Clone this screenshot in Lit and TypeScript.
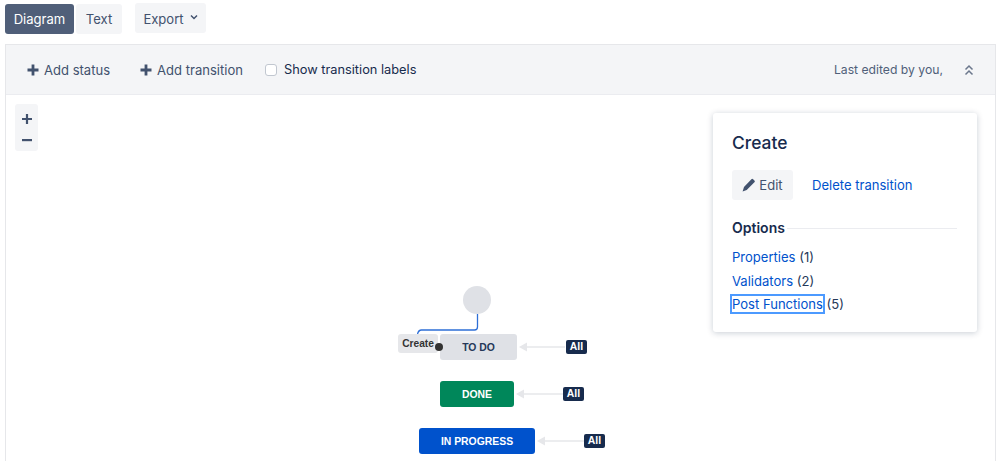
import { LitElement, html, css, svg } from "lit";
import { customElement } from "lit/decorators.js";

const plus = html`<svg class="plus" viewBox="0 0 12 12"><path d="M4.6 .5h2.8v4.1h4.1v2.8H7.4v4.1H4.6V7.4H.5V4.6h4.1z" fill="#42526e"/></svg>`;

const arrow = (x: number, y: number, len: number) => svg`
  <path d="M${x} ${y}h${len}" stroke="#e6e7ea" stroke-width="1.5" fill="none"/>
  <path d="M${x - 8} ${y}l8 -4.5v9z" fill="#e6e7ea"/>`;

@customElement("app-root")
export class AppRoot extends LitElement {
  static styles = css`
    :host { display: block; width: 999px; height: 461px; overflow: hidden; background: #fff; font-family: Inter, "Liberation Sans", sans-serif; color: #172b4d; font-size: 13.05px; }
    * { box-sizing: border-box; }
    .tabs { display: flex; align-items: flex-start; height: 44px; padding: 3px 0 0 5px; }
    .btn { display: flex; align-items: center; justify-content: center; border-radius: 3px; background: #f4f5f7; color: #42526e; height: 30px; margin-top: 1px; }
    .diagram { width: 69px; background: #505f79; color: #fff; }
    .text { width: 46px; margin-left: 2px; }
    .export { width: 71px; margin: 0 0 0 13px; gap: 6px; padding-top: 1px; }
    .chev { width: 8px; height: 6px; margin-top: -3px; }
    .panel { position: relative; margin: 0 3px 0 5px; height: 417px; border: 1px solid #e6e7ea; border-bottom: 0; }
    .toolbar { display: flex; align-items: center; height: 50px; padding: 0 0 0 21px; background: #f4f5f7; border-bottom: 1px solid #ebecf0; color: #42526e; }
    .tool { display: flex; align-items: center; gap: 5px; }
    .add2 { margin-left: 30px; }
    .plus { width: 12px; height: 12px; flex: none; }
    .check { display: flex; align-items: center; gap: 7px; margin-left: 22px; color: #172b4d; font-size: 12.8px; }
    .box { width: 12px; height: 12px; border: 1px solid #c1c7d0; border-radius: 3px; background: #fff; }
    .edited { margin-left: auto; font-size: 12.2px; color: #505f79; }
    .collapse { width: 10px; height: 12px; margin: 0 21px 0 21px; }
    .canvas { position: relative; height: 366px; }
    .zoom { position: absolute; left: 9px; top: 9px; width: 23px; height: 47px; background: #f4f5f7; border-radius: 3px; display: flex; flex-direction: column; align-items: center; gap: 11px; padding-top: 10px; }
    .zoom svg { width: 10px; height: 10px; }
    .card { position: absolute; left: 707px; top: 18px; width: 264px; height: 219px; background: #fff; border-radius: 3px; box-shadow: 0 1px 6px rgba(9, 30, 66, .22); padding: 18px 20px 18px 19px; }
    .card h2 { margin: 0; font-size: 17.4px; line-height: 24px; font-weight: 500; color: #172b4d; }
    .actions { display: flex; align-items: center; margin-top: 15px; height: 30px; }
    .edit { display: flex; align-items: center; justify-content: center; gap: 4px; width: 61px; height: 30px; background: #f4f5f7; border-radius: 3px; color: #42526e; }
    .edit svg { width: 13px; height: 14px; }
    a { color: #0052cc; text-decoration: none; }
    .delete { margin-left: 19px; }
    .options { display: flex; align-items: center; gap: 2px; margin-top: 18px; font-weight: 600; font-size: 14px; line-height: 20px; }
    .options::after { content: ""; flex: 1; height: 1px; background: #ebecf0; }
    .links { margin-top: 8px; display: flex; flex-direction: column; }
    .links div { height: 23.5px; line-height: 23.5px; color: #253858; }
    .focus { outline: 2px solid #4c9aff; outline-offset: 0; }
    .node { position: absolute; display: flex; align-items: center; justify-content: center; font-size: 10.4px; font-weight: 700; font-family: "Liberation Sans", Arial, sans-serif; border-radius: 3px; height: 26px; }
    .todo { left: 434px; top: 239px; width: 77px; background: #dfe1e6; color: #253858; }
    .done { left: 434px; top: 286px; width: 74px; background: #00875a; color: #fff; }
    .prog { left: 413px; top: 333px; width: 116px; background: #0052cc; color: #fff; }
    .start { position: absolute; left: 457px; top: 191px; width: 28px; height: 28px; border-radius: 50%; background: #dfe1e6; }
    .label { position: absolute; left: 392px; top: 239px; width: 40px; height: 19px; background: #e6e7ea; border-radius: 3px; padding-bottom: 1px; display: flex; align-items: center; justify-content: center; font: 700 10.2px "Liberation Sans", Arial, sans-serif; color: #333; }
    .dot { position: absolute; left: 429px; top: 248px; width: 8px; height: 8px; border-radius: 50%; background: #333; }
    .all { position: absolute; width: 21px; height: 14px; background: #172b4d; color: #fff; border-radius: 2px; font: 700 10.4px/14px "Liberation Sans", Arial, sans-serif; text-align: center; }
    .lines { position: absolute; left: 0; top: 0; width: 700px; height: 366px; }
  `;

  render() {
    return html`
      <div class="tabs">
        <div class="btn diagram">Diagram</div>
        <div class="btn text">Text</div>
        <div class="btn export">Export
          <svg class="chev" viewBox="0 0 8 6"><path d="M1 1.5l3 3 3-3" fill="none" stroke="#42526e" stroke-width="1.5"/></svg>
        </div>
      </div>
      <div class="panel">
        <div class="toolbar">
          <div class="tool">${plus}<span>Add status</span></div>
          <div class="tool add2">${plus}<span>Add transition</span></div>
          <label class="check"><span class="box"></span><span>Show transition labels</span></label>
          <span class="edited">Last edited by you,</span>
          <svg class="collapse" viewBox="0 0 10 12"><path d="M1.5 5.5L5 2l3.5 3.5M1.5 10.5L5 7l3.5 3.5" fill="none" stroke="#6b778c" stroke-width="1.5"/></svg>
        </div>
        <div class="canvas">
          <div class="zoom">
            <svg viewBox="0 0 10 10"><path d="M3.9 0h2.2v3.9H10v2.2H6.1V10H3.9V6.1H0V3.9h3.9z" fill="#42526e"/></svg>
            <svg viewBox="0 0 10 10"><path d="M0 4h10v2.2H0z" fill="#42526e"/></svg>
          </div>
          <svg class="lines" viewBox="0 0 700 366">
            <path d="M471.5 219v13q0 3-3 3h-53q-3 0-4 4" fill="none" stroke="#2e6fd6" stroke-width="1.3"/>
            ${arrow(521, 252, 38)}
            ${arrow(518, 299, 39)}
            ${arrow(539, 346, 39)}
          </svg>
          <div class="start"></div>
          <div class="node todo">TO DO</div>
          <div class="label">Create</div>
          <div class="dot"></div>
          <div class="node done">DONE</div>
          <div class="node prog">IN PROGRESS</div>
          <div class="all" style="left:560px;top:245px">All</div>
          <div class="all" style="left:557px;top:292px">All</div>
          <div class="all" style="left:578px;top:339px">All</div>
          <div class="card">
            <h2>Create</h2>
            <div class="actions">
              <div class="edit">
                <svg viewBox="0 0 13 14"><path d="M9.4 1.3a1.2 1.2 0 0 1 1.7 0l1.3 1.3a1.2 1.2 0 0 1 0 1.7L4.7 12 .6 13.4 2 9z" fill="#42526e"/></svg>
                <span>Edit</span>
              </div>
              <a class="delete" href="#">Delete transition</a>
            </div>
            <div class="options">Options</div>
            <div class="links">
              <div><a href="#">Properties</a> (1)</div>
              <div><a href="#">Validators</a> (2)</div>
              <div><a class="focus" href="#">Post Functions</a> (5)</div>
            </div>
          </div>
        </div>
      </div>
    `;
  }
}
